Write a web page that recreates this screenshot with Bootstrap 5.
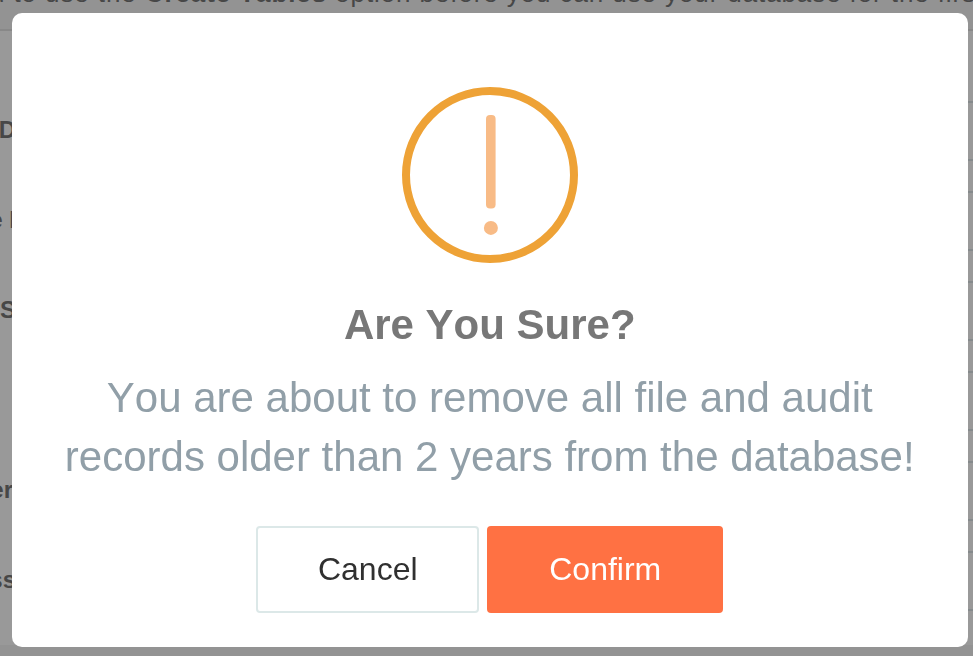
<!DOCTYPE html>
<html lang="en">
<head>
<meta charset="utf-8">
<meta name="viewport" content="width=device-width, initial-scale=1">
<title>Are You Sure?</title>
<link href="https://cdn.jsdelivr.net/npm/bootstrap@5.3.0/dist/css/bootstrap.min.css" rel="stylesheet">
<style>
body { font-family: "Liberation Sans", Arial, sans-serif; font-kerning: none; background: #939393; height: 656px; overflow: hidden; }
.backpage { height: 656px; color: #474747; }
.notice { height: 29px; line-height: 30px; font-size: 26px; letter-spacing: .9px; margin-top: -22px; margin-left: -10px; white-space: nowrap; }
.settings { height: 616px; margin-top: 22px; background: #999; border-top: 2px solid #888; padding-top: 70px; }
.setting { height: 60px; margin-bottom: 30px; line-height: 57px; font-size: 24px; font-weight: 700; }
.setting-label { width: 16px; height: 60px; white-space: pre; direction: rtl; }
.setting-label.narrow { width: 13px; }
.setting-label bdi { direction: ltr; }
.setting-input { width: 40px; border: solid #858a8c; border-width: 2px 0; }
.confirm-layer { padding: 13px 5.5px 9px 12px; }
.confirm-box { height: 634px; border: 0; border-radius: 10px; padding-top: 74px; }
.warn-icon { width: 176px; height: 176px; }
.confirm-title { font-size: 42px; line-height: 50px; font-weight: 700; color: #777; margin: 37px 0 0; }
.confirm-text { font-size: 42px; line-height: 59px; color: #919fa8; margin: 18px 0 0; }
.actions { gap: 8px; margin-top: 40px; }
.actions .btn { height: 87px; font-size: 32px; border-radius: 4px; padding: 0 0 1px; }
.btn-cancel { width: 223px; border: 2px solid #dce8e8; color: #303030; background: #fff; }
.btn-confirm { width: 236px; border: 0; color: #fff; background: #ff7143; }
</style>
</head>
<body>
<div class="backpage overflow-hidden">
  <div class="notice">d to use the <b>Create Tables</b> option before you can use your database for the first</div>
  <div class="settings">
    <div class="setting d-flex justify-content-between"><div class="setting-label"><bdi>D</bdi></div><div class="setting-input"></div></div>
    <div class="setting d-flex justify-content-between"><div class="setting-label"><bdi>e I</bdi></div><div class="setting-input"></div></div>
    <div class="setting d-flex justify-content-between"><div class="setting-label"><bdi>S</bdi></div><div class="setting-input"></div></div>
    <div class="setting d-flex justify-content-between"><div class="setting-label"></div><div class="setting-input"></div></div>
    <div class="setting d-flex justify-content-between"><div class="setting-label narrow"><bdi>er</bdi></div><div class="setting-input"></div></div>
    <div class="setting d-flex justify-content-between"><div class="setting-label"><bdi>ss</bdi></div><div class="setting-input"></div></div>
  </div>
</div>
<div class="modal d-block confirm-layer overflow-hidden" role="dialog" aria-modal="true">
  <div class="modal-content confirm-box text-center align-items-center">
    <svg class="warn-icon" viewBox="0 0 176 176" aria-hidden="true">
      <circle cx="88" cy="88" r="84" fill="none" stroke="#eea236" stroke-width="8"/>
      <rect x="84" y="28" width="9.6" height="93.6" rx="4" fill="#f8bb86"/>
      <circle cx="88.9" cy="140.9" r="7" fill="#f8bb86"/>
    </svg>
    <h2 class="confirm-title">Are You Sure?</h2>
    <p class="confirm-text">You are about to remove all file and audit<br>records older than 2 years from the database!</p>
    <div class="actions d-flex justify-content-center">
      <button type="button" class="btn btn-cancel">Cancel</button>
      <button type="button" class="btn btn-confirm">Confirm</button>
    </div>
  </div>
</div>
<script src="https://cdn.jsdelivr.net/npm/bootstrap@5.3.0/dist/js/bootstrap.bundle.min.js"></script>
</body>
</html>
